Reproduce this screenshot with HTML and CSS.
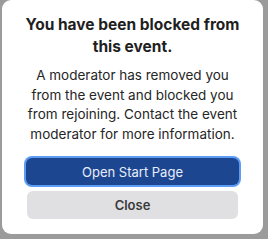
FILE: index.html
```html
<!DOCTYPE html>
<html>
<head>
<meta charset="utf-8">
<link rel="stylesheet" href="styles.css">
</head>
<body>
<div class="dialog">
  <h1 class="title">You have been blocked from this event.</h1>
  <p class="message">A moderator has removed you from the event and blocked you from rejoining. Contact the event moderator for more information.</p>
  <div class="actions">
    <button class="btn primary">Open Start Page</button>
    <button class="btn secondary">Close</button>
  </div>
</div>
</body>
</html>
```
FILE: styles.css
```css
html, body {
  margin: 0;
  padding: 0;
}
body {
  width: 268px;
  height: 239px;
  background: #9b9b9b;
  font-family: Inter, "Liberation Sans", sans-serif;
  overflow: hidden;
}
.dialog {
  box-sizing: border-box;
  width: 261px;
  height: 234px;
  margin-left: 2px;
  background: #ffffff;
  border-radius: 9px;
  padding: 14px 22px 0 22px;
  display: flex;
  flex-direction: column;
  align-items: center;
  color: #1f1f1f;
}
.title {
  margin: 0 -10px;
  font-size: 15.5px;
  font-weight: 700;
  line-height: 22px;
  text-align: center;
}
.message {
  margin: 8px -3px 0 -3px;
  font-size: 13.5px;
  line-height: 19.5px;
  text-align: center;
  color: #262626;
}
.actions {
  margin-top: 12px;
  width: 213px;
  display: flex;
  flex-direction: column;
  gap: 6px;
}
.btn {
  font-family: Inter, "Liberation Sans", sans-serif;
  font-size: 13px;
  border: none;
  border-radius: 6px;
  height: 28px;
  width: 100%;
  padding: 0;
}
.primary {
  background: #1d4690;
  color: #e8eefa;
  box-shadow: 0 0 0 2px #5d9cf2;
  height: 27px;
  margin-top: 2px;
}
.secondary {
  background: #e0e0e2;
  color: #3a3a3a;
  font-weight: 600;
  width: 211px;
  align-self: center;
}
```
